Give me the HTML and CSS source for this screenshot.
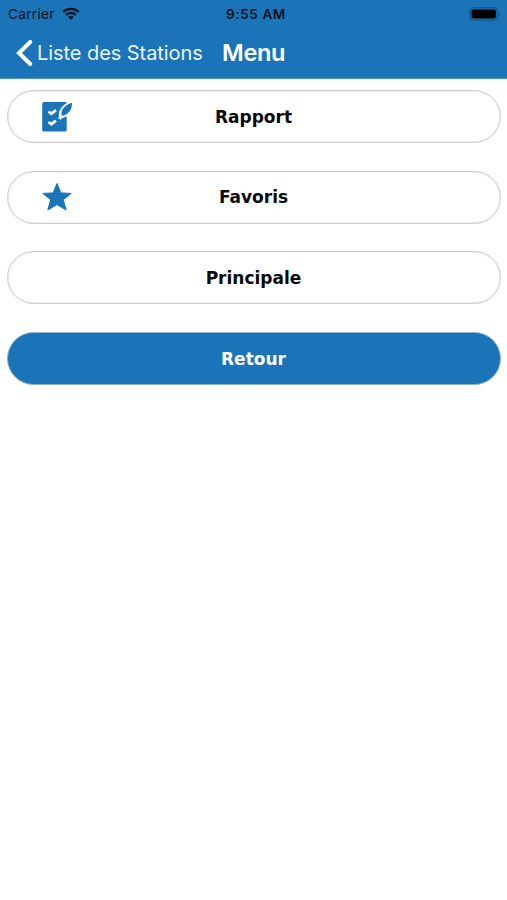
FILE: index.html
```html
<!DOCTYPE html>
<html lang="fr">
<head>
<meta charset="utf-8">
<title>Menu</title>
<link rel="stylesheet" href="styles.css">
</head>
<body>
<header class="header">
  <div class="status">
    <div class="carrier"><span>Carrier</span>
      <svg class="wifi" width="18" height="13" viewBox="0 0 18 13"><g fill="none" stroke="#06121d" stroke-width="2.3"><path d="M1.3 4.9C5.5.9 12.500.9 16.700 4.900"/><path d="M4.200 7.900C6.900 5.300 11.100 5.300 13.800 7.900"/></g><path d="M6.200 9.900Q9 7.700 11.800 9.900L9 12.700Z" fill="#06121d"/></svg>
    </div>
    <div class="time">9:55 AM</div>
    <svg class="battery" width="32" height="14" viewBox="0 0 32 14"><rect x=".8" y=".8" width="27.600" height="12.400" rx="3.300" fill="none" stroke="#124f80"/><rect x="2.500" y="2.500" width="24.300" height="9" rx="1.800" fill="#000"/><path d="M29.800 4.800Q32 7 29.800 9.200Z" fill="#124f80"/></svg>
  </div>
  <nav class="nav">
    <a class="back"><svg width="17" height="26" viewBox="0 0 17 26"><path d="M14.200 2L3 13L14.200 24" fill="none" stroke="#fff" stroke-width="4" stroke-linecap="round" stroke-linejoin="miter"/></svg><span>Liste des Stations</span></a>
    <h1 class="title">Menu</h1>
  </nav>
</header>
<main class="menu">
  <button class="item"><svg class="icon" width="32" height="32" viewBox="0 0 32 32"><path d="M3 1H25Q25.700 1 25.700 2V29Q25.700 30.500 24 30.500H3Q1.200 30.500 1.200 29V3Q1.200 1 3 1Z" fill="#1b74b7"/><path d="M30.500 2.500C31.500 7 28 14.500 20 15.500C18 10.500 23 4 30.500 2.500ZM20 15.500L18.500 18" fill="#fff" stroke="#fff" stroke-width="3.400" stroke-linejoin="round"/><path d="M30.800 1.800C31.600 7.500 28 14 20.600 14.700C19.300 9.500 23.500 4 30.800 1.800Z" fill="#1b74b7"/><path d="M7.500 10.500L10.300 12.700L15 9.200M7.500 21L10.300 23.200L15 19.700" fill="none" stroke="#fff" stroke-width="2.700"/></svg><span>Rapport</span></button>
  <button class="item"><svg class="icon" width="32" height="32" viewBox="0 0 32 32"><path d="M16 2.500L19.900 11.900L30.200 12.400L22.300 18.700L25.200 29L16 23.600L6.800 29L9.700 18.700L1.800 12.400L12.100 11.900Z" fill="#1b74b7" stroke="#1b74b7" stroke-linejoin="round"/></svg><span>Favoris</span></button>
  <button class="item"><span>Principale</span></button>
  <button class="item primary"><span>Retour</span></button>
</main>
</body>
</html>
```
FILE: styles.css
```css
* { box-sizing: border-box; }
body { margin: 0; min-height: 100vh; background: #fff; font-family: Inter, "Liberation Sans", sans-serif; }
.header { height: 79px; background: #1b74b7; border-bottom: 1px solid #4794cc; }
.status { display: grid; grid-template-columns: 1fr auto 1fr; align-items: center; height: 27px; padding: 0 6px 0 8px; color: #06121d; font-size: 13.5px; }
.carrier { display: flex; align-items: center; gap: 7px; letter-spacing: .35px; }
.time { font-weight: 600; letter-spacing: .6px; margin-left: 3px; }
.battery { justify-self: end; }
.nav { display: flex; align-items: center; height: 51px; padding-left: 16px; color: #fff; }
.back { display: flex; align-items: center; gap: 4px; width: 206px; font-size: 20px; letter-spacing: -.06px; white-space: nowrap; color: #e9f4fd; }
.title { margin: 0; font-size: 23.5px; font-weight: 600; letter-spacing: -.3px; }
.menu { display: grid; grid-auto-rows: 53px; row-gap: 27.700px; padding: 90px 6px 0 7px; margin-top: -79px; }
.item { display: grid; grid-template-columns: 1fr auto 1fr; align-items: center; padding: 0; border: 1px solid #cecece; border-radius: 27px; background: #fff; box-shadow: inset 0 0 0 .5px #ddd; color: #080808; font: bold 17px "DejaVu Sans", sans-serif; }
.item span { grid-column: 2; margin-right: 1px; }
.icon { grid-column: 1; margin-left: 33px; }
.primary { background: #1b74b7; color: #fff; border-color: #8fb3ce; box-shadow: none; }
```
